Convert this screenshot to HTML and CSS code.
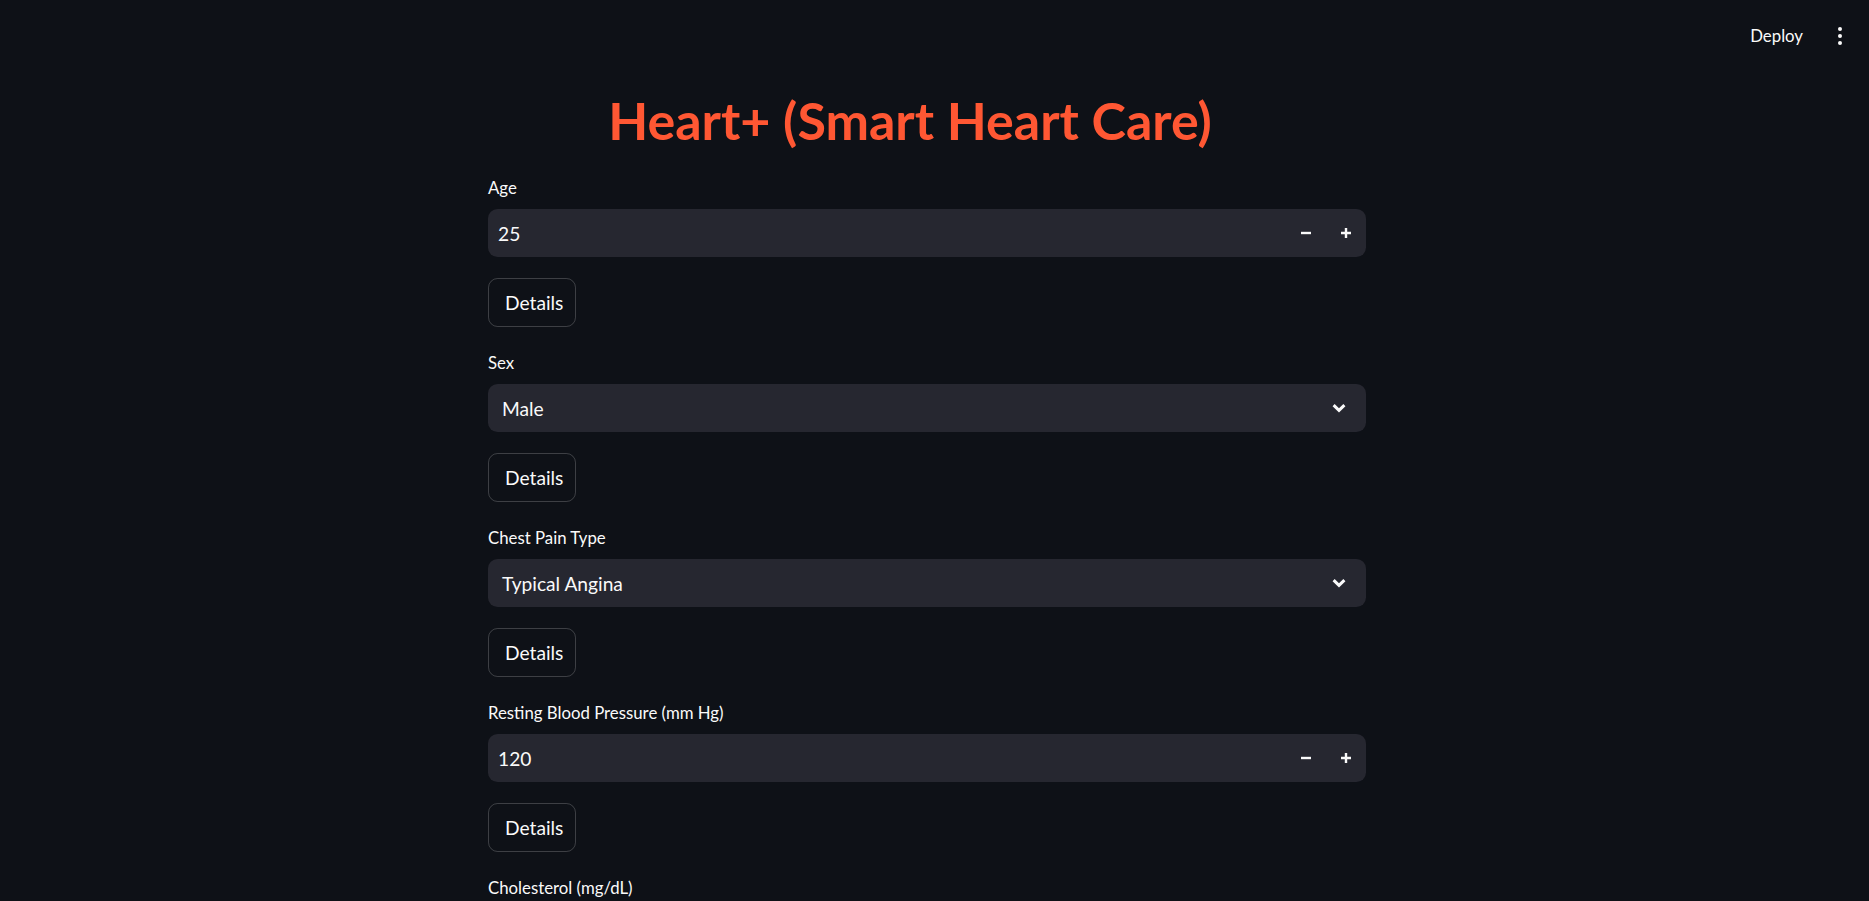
FILE: index.html
```
<!DOCTYPE html>
<html lang="en">
<head>
<meta charset="utf-8">
<title>Heart+ (Smart Heart Care)</title>
<link rel="stylesheet" href="styles.css">
</head>
<body>
<div class="app">
  <header class="topbar">
    <span class="deploy">Deploy</span>
    <span class="kebab">
      <svg width="4" height="18" viewBox="0 0 4 18"><circle cx="2" cy="2" r="2"/><circle cx="2" cy="9" r="2"/><circle cx="2" cy="16" r="2"/></svg>
    </span>
  </header>
  <main class="main">
    <div class="block">
      <h1 class="title">Heart+ (Smart Heart Care)</h1>

      <div class="field">
        <label class="label">Age</label>
        <div class="control number">
          <span class="value">25</span>
          <div class="steps">
            <span class="step"><svg width="10" height="10" viewBox="0 0 10 10"><path d="M0 5h10"/></svg></span>
            <span class="step"><svg width="10" height="10" viewBox="0 0 10 10"><path d="M0 5h10M5 0v10"/></svg></span>
          </div>
        </div>
      </div>
      <button class="details">Details</button>

      <div class="field">
        <label class="label">Sex</label>
        <div class="control select">
          <span class="value">Male</span>
          <svg class="chev" width="14" height="10" viewBox="0 0 14 10"><path d="M1.6 2.2L7 7.4l5.4-5.2"/></svg>
        </div>
      </div>
      <button class="details">Details</button>

      <div class="field">
        <label class="label">Chest Pain Type</label>
        <div class="control select">
          <span class="value">Typical Angina</span>
          <svg class="chev" width="14" height="10" viewBox="0 0 14 10"><path d="M1.6 2.2L7 7.4l5.4-5.2"/></svg>
        </div>
      </div>
      <button class="details">Details</button>

      <div class="field">
        <label class="label">Resting Blood Pressure (mm Hg)</label>
        <div class="control number">
          <span class="value">120</span>
          <div class="steps">
            <span class="step"><svg width="10" height="10" viewBox="0 0 10 10"><path d="M0 5h10"/></svg></span>
            <span class="step"><svg width="10" height="10" viewBox="0 0 10 10"><path d="M0 5h10M5 0v10"/></svg></span>
          </div>
        </div>
      </div>
      <button class="details">Details</button>

      <div class="field">
        <label class="label">Cholesterol (mg/dL)</label>
        <div class="control number">
          <span class="value"></span>
          <div class="steps">
            <span class="step"><svg width="10" height="10" viewBox="0 0 10 10"><path d="M0 5h10"/></svg></span>
            <span class="step"><svg width="10" height="10" viewBox="0 0 10 10"><path d="M0 5h10M5 0v10"/></svg></span>
          </div>
        </div>
      </div>
    </div>
  </main>
</div>
</body>
</html>
```
FILE: styles.css
```
* { box-sizing: border-box; }

html, body {
  margin: 0;
  padding: 0;
  height: 100%;
  overflow: hidden;
  background: #0e1117;
}

body {
  font-family: Lato, "Liberation Sans", sans-serif;
  color: #fafafa;
}

.topbar {
  height: 72px;
  display: flex;
  justify-content: flex-end;
  align-items: center;
  gap: 25px;
  padding-right: 17px;
}

.deploy {
  font-size: 16.8px;
  line-height: 20px;
}

.kebab {
  width: 24px;
  height: 24px;
  display: flex;
  align-items: center;
  justify-content: center;
}

.kebab svg { fill: #fafafa; }

.main {
  width: 1854px;
  display: flex;
  justify-content: center;
  padding-top: 16px;
}

.block {
  width: 878px;
  display: flex;
  flex-direction: column;
  gap: 21px;
}

.title {
  margin: 0;
  font-size: 52px;
  line-height: 64px;
  font-weight: 700;
  text-align: center;
  color: #ff5733;
  padding-right: 34px;
}

.field {
  padding-top: 4.5px;
}

.label {
  display: block;
  font-size: 16.8px;
  line-height: 20px;
  margin-bottom: 11.5px;
}

.control {
  height: 48px;
  background: #262730;
  border-radius: 9.6px;
  display: flex;
  align-items: center;
  font-size: 19.2px;
}

.number { padding-left: 10px; }

.number .value { flex: 1; }

.steps {
  display: flex;
  height: 100%;
}

.step {
  width: 40px;
  display: flex;
  align-items: center;
  justify-content: center;
}

.step svg {
  stroke: #fafafa;
  stroke-width: 2.4;
  fill: none;
}

.select {
  padding-left: 14px;
  padding-right: 20px;
  justify-content: space-between;
}

.chev {
  stroke: #fafafa;
  stroke-width: 3;
  fill: none;
}

.details {
  align-self: flex-start;
  height: 49px;
  width: 88px;
  padding: 0 16px;
  background: transparent;
  border: 1px solid rgba(250, 250, 250, 0.2);
  border-radius: 9.6px;
  color: #fafafa;
  font-family: Lato, "Liberation Sans", sans-serif;
  font-size: 19.2px;
}
```
